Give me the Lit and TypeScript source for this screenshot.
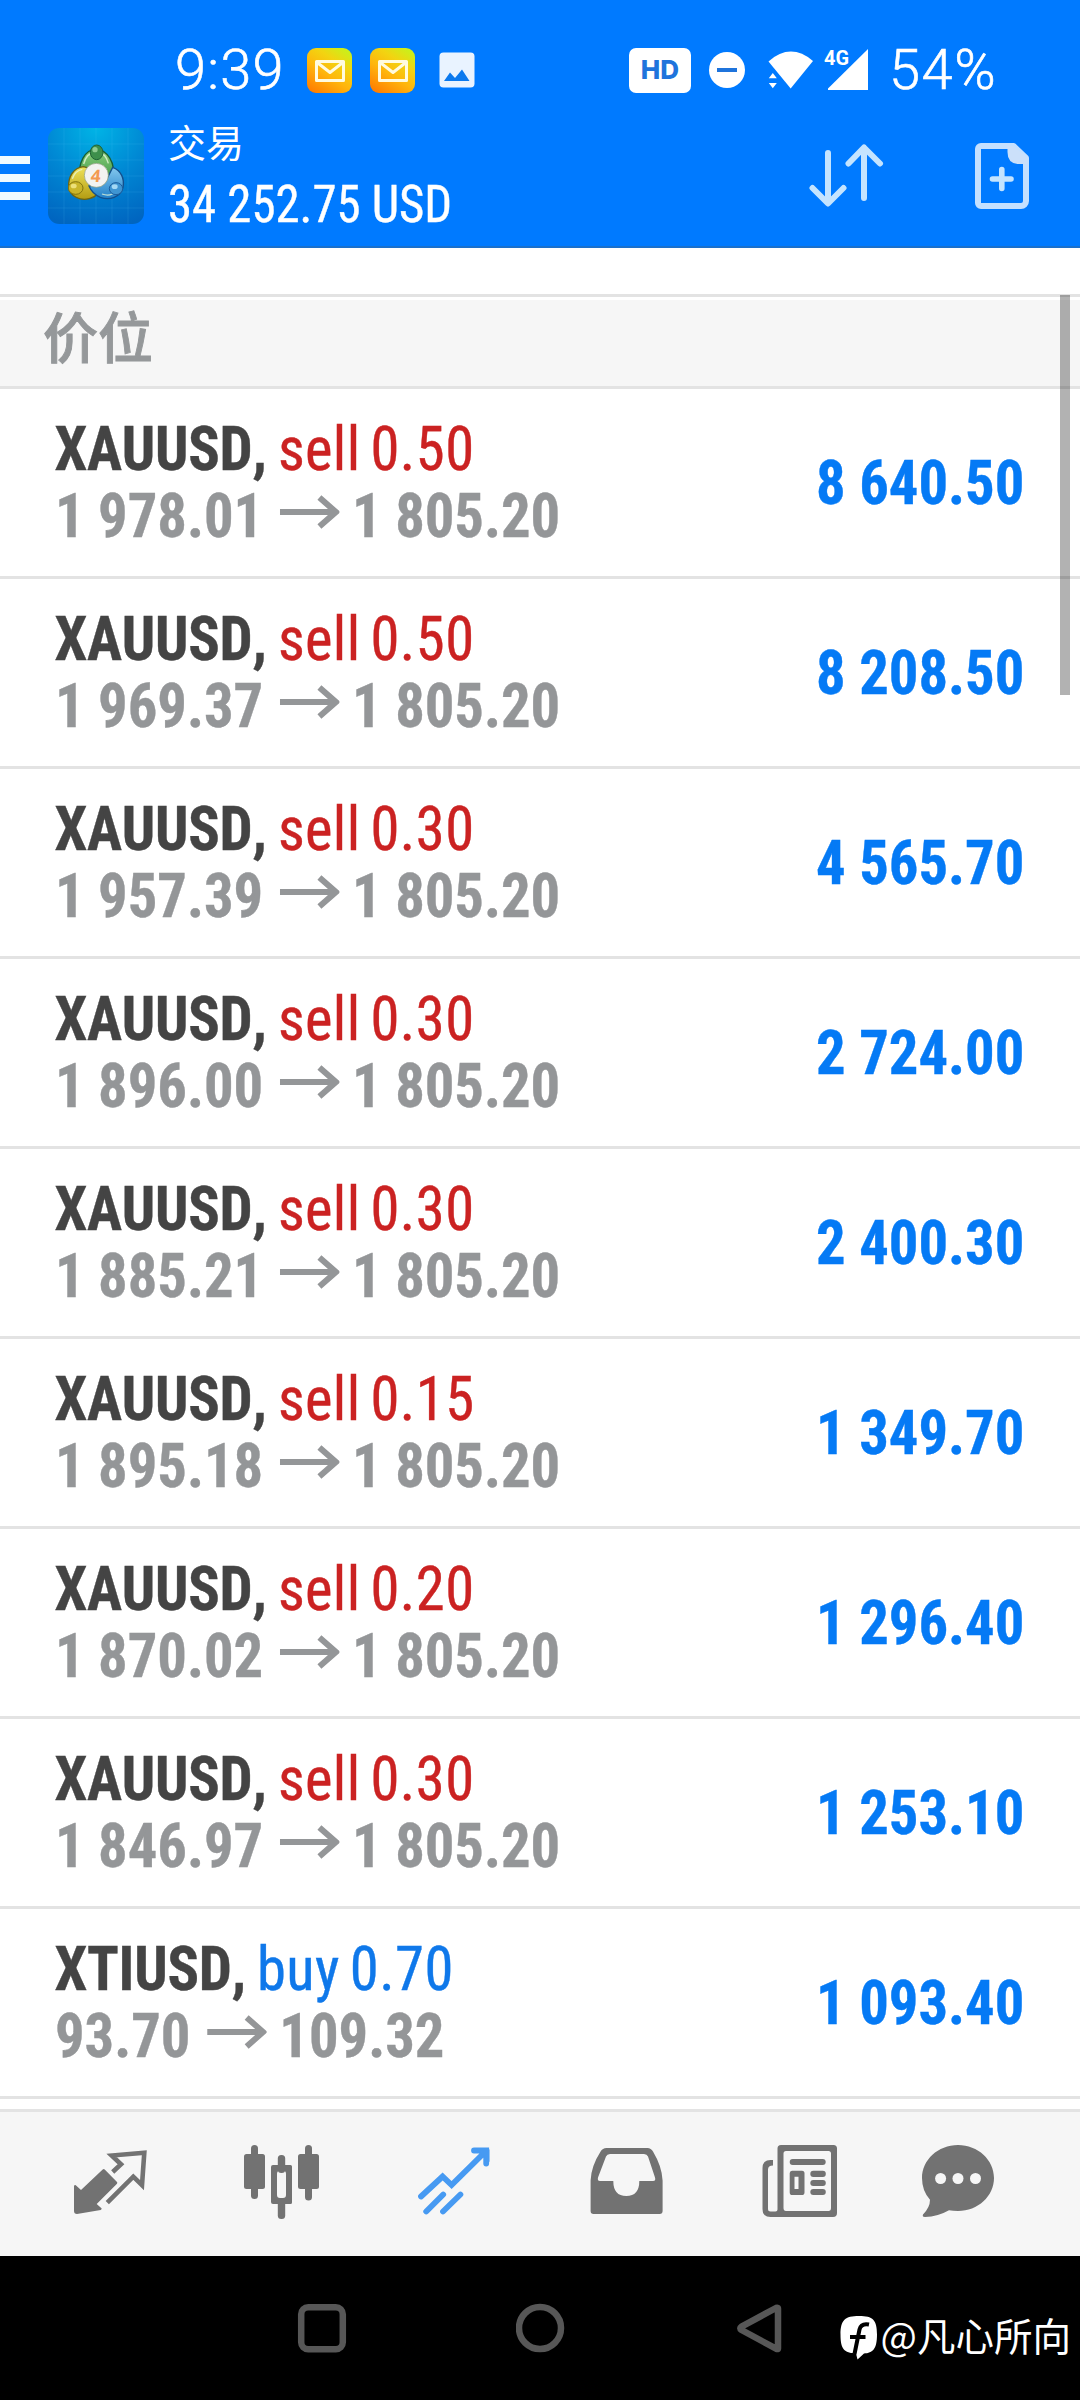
import { LitElement, html, svg, css } from 'lit';
import { customElement, property } from 'lit/decorators.js';
import { classMap } from 'lit/directives/class-map.js';

interface Position {
  symbol: string;
  side: 'sell' | 'buy';
  volume: string;
  open: string;
  current: string;
  profit: string;
}

const p = (
  symbol: string, side: 'sell' | 'buy', volume: string,
  open: string, current: string, profit: string,
): Position => ({ symbol, side, volume, open, current, profit });

const POSITIONS: Position[] = [
  p('XAUUSD', 'sell', '0.50', '1 978.01', '1 805.20', '8 640.50'),
  p('XAUUSD', 'sell', '0.50', '1 969.37', '1 805.20', '8 208.50'),
  p('XAUUSD', 'sell', '0.30', '1 957.39', '1 805.20', '4 565.70'),
  p('XAUUSD', 'sell', '0.30', '1 896.00', '1 805.20', '2 724.00'),
  p('XAUUSD', 'sell', '0.30', '1 885.21', '1 805.20', '2 400.30'),
  p('XAUUSD', 'sell', '0.15', '1 895.18', '1 805.20', '1 349.70'),
  p('XAUUSD', 'sell', '0.20', '1 870.02', '1 805.20', '1 296.40'),
  p('XAUUSD', 'sell', '0.30', '1 846.97', '1 805.20', '1 253.10'),
  p('XTIUSD', 'buy', '0.70', '93.70', '109.32', '1 093.40'),
];

@customElement('status-bar')
export class StatusBar extends LitElement {
  static styles = css`
    :host { display: block; color: #fff; }
    .bar {
      display: flex; align-items: center; height: 100px;
      padding: 20px 0 0 175px; box-sizing: content-box;
      font: 300 56px/60px Roboto, sans-serif; -webkit-text-stroke: .6px #fff;
    }
    .time { width: 132px; white-space: nowrap; letter-spacing: 1.2px; }
    .mail { width: 45px; height: 45px; margin-right: 18px; }
    .photo { width: 36px; height: 36px; margin-left: 6px; }
    .hd {
      width: 62px; height: 45px; border-radius: 7px; background: #fff;
      color: #1f74dc; text-align: center; font: 800 26px/44px Inter, sans-serif;
      margin-left: 154px; -webkit-text-stroke: 0;
    }
    .dnd { width: 36px; height: 36px; margin-left: 18px; }
    .net { width: 104px; height: 44px; margin-left: 22px; overflow: visible; }
    .battery { margin-left: 18px; letter-spacing: 1.5px; }
    .net text { font: 700 21px Roboto, sans-serif; }
  `;
  private mail(id: string) {
    return html`<svg class="mail" viewBox="0 0 45 45">
      <defs>
        <linearGradient id=${id} x1="0.1" y1="1" x2="0.75" y2="0">
          <stop offset="0" stop-color="#ff7a00"/><stop offset=".45" stop-color="#ffb60c"/>
          <stop offset=".75" stop-color="#f2d411"/><stop offset="1" stop-color="#cdee1a"/>
        </linearGradient>
      </defs>
      <rect width="45" height="45" rx="9" fill="url(#${id})"/>
      <path d="M9.500 13.500h27v19h-27zM9.500 14l13.500 10.500L36.500 14" fill="none" stroke="#fffbe0" stroke-width="3" stroke-linejoin="round"/>
    </svg>`;
  }
  render() {
    return html`<div class="bar">
      <span class="time">9:39</span>
      ${this.mail('m1')}${this.mail('m2')}
      <svg class="photo" viewBox="0 0 36 36">
        <rect x=".5" y=".5" width="35" height="35" rx="4" fill="#e9f3ff"/>
        <path d="M5 29l6-8.500 5 5.500 7-8.500 7.500 11.500z" fill="#0b79ee"/>
      </svg>
      <span class="hd">HD</span>
      <svg class="dnd" viewBox="0 0 36 36">
        <circle cx="18" cy="18" r="18" fill="#fff"/><path d="M8 18h20" stroke="#1f74dc" stroke-width="4"/>
      </svg>
      <svg class="net" viewBox="767 47 104 44">
        <path d="M768.500 60.500Q790.500 41 813 60L790.700 87.500z" fill="#fff"/>
        <path d="M768.800 77.300l4-5.300 4 5.300zM768.800 82l4 5.300 4-5.300z" fill="#fff" stroke="#007aff" stroke-width="1" paint-order="stroke"/>
        <text x="824" y="64" fill="#fff" textLength="25" lengthAdjust="spacingAndGlyphs">4G</text>
        <path d="M868 48v41h-40v-1.500z" fill="#fff"/>
      </svg>
      <span class="battery">54%</span>
    </div>`;
  }
}

@customElement('app-bar')
export class AppBar extends LitElement {
  static styles = css`
    :host { display: block; color: #fff; }
    .bar { display: flex; align-items: center; height: 112px; padding-bottom: 14px; }
    .menu { width: 30px; height: 44px; padding-top: 4px; }
    .logo { width: 96px; height: 96px; margin-left: 18px; }
    .four { font: 700 52px "Open Sans", sans-serif; }
    .account { align-self: flex-start; margin-left: 24px; padding-top: 1px; flex: 1; }
    .title { font: 400 38px/40px "Noto Sans CJK SC", sans-serif; }
    .balance {
      font: 400 51px/60px "Roboto Condensed", Roboto, sans-serif; margin-top: 14px;
      transform: scaleX(.956); transform-origin: left; -webkit-text-stroke: .4px #fff;
    }
    .sort { width: 76px; height: 66px; }
    .order { width: 56px; height: 68px; margin: 0 50px 0 90px; }
  `;
  render() {
    return html`<div class="bar">
      <svg class="menu" viewBox="0 0 30 44"><path d="M0 4h30M0 22h30M0 40h30" stroke="#f0faff" stroke-width="8"/></svg>
      <svg class="logo" viewBox="144 24 288 288">
        <defs>
          <radialGradient id="bg" cx=".5" cy="0" r="1.050">
            <stop offset="0" stop-color="#00b4e6"/><stop offset=".5" stop-color="#0088d4"/><stop offset="1" stop-color="#0065c0"/>
          </radialGradient>
          <linearGradient id="g" x1="0" y1="0" x2="0" y2="1"><stop offset="0" stop-color="#8ccf7c"/><stop offset="1" stop-color="#2c8c3c"/></linearGradient>
          <linearGradient id="y" x1="0" y1="0" x2="0" y2="1"><stop offset="0" stop-color="#efe25a"/><stop offset="1" stop-color="#b39c12"/></linearGradient>
          <linearGradient id="b" x1="0" y1="0" x2="0" y2="1"><stop offset="0" stop-color="#84c8ee"/><stop offset="1" stop-color="#2280c8"/></linearGradient>
        </defs>
        <rect x="144" y="24" width="288" height="288" rx="34" fill="url(#bg)"/>
        <path d="M192 24v288M240 24v288M288 24v288M336 24v288M384 24v288M144 72h288M144 120h288M144 168h288M144 216h288M144 264h288" stroke="#5cc8f4" stroke-opacity=".2" stroke-width="2"/>
        <path d="M240 178C232 128 256 88 288 88s62 40 50 92l-50 20z" fill="url(#g)" stroke="#185f34" stroke-width="4"/>
        <path d="M250 140c-30 4-46 30-44 62 4 26 34 42 62 34 16-4 24-14 24-14l-20-76z" fill="url(#y)" stroke="#6e6410" stroke-width="4"/>
        <path d="M338 142c26 10 36 34 31 60-8 30-40 40-68 30-18-8-30-24-34-34l50-14z" fill="url(#b)" stroke="#134f8c" stroke-width="4"/>
        <path d="M251 132q8-34 38-36 28 2 36 34M217 176q8-24 30-28M306 222q26 10 44-10" fill="none" stroke="#e6f8d8" stroke-opacity=".8" stroke-width="4"/>
        <ellipse cx="290" cy="97" rx="19" ry="22" fill="#3d8f4b" stroke="#1f6235" stroke-width="3"/>
        <ellipse cx="285" cy="89" rx="8" ry="8" fill="#8fcb90"/>
        <ellipse cx="227" cy="204" rx="22" ry="19" fill="#c9b52a" stroke="#82740f" stroke-width="3"/>
        <ellipse cx="221" cy="198" rx="9" ry="7" fill="#ece07a"/>
        <ellipse cx="348" cy="206" rx="20" ry="18" fill="#3f95d2" stroke="#1a5c9c" stroke-width="3"/>
        <ellipse cx="344" cy="200" rx="9" ry="7" fill="#a4d8f4"/>
        <circle cx="289" cy="166" r="36" fill="#f3f3f1" stroke="#8d9a78" stroke-width="2"/>
        <text class="four" x="272" y="186" fill="#f39a50" transform="skewX(-6) translate(18 0)">4</text>
      </svg>
      <div class="account">
        <div class="title">交易</div>
        <div class="balance">34 252.75 USD</div>
      </div>
      <svg class="sort" viewBox="808 143 76 66" fill="none" stroke="#c4e4ff" stroke-width="6" stroke-linecap="round" stroke-linejoin="round">
        <path d="M828 153v50M812.500 188L828 203.500 843.500 188M864 198v-50M848.500 163.500L864 147.500 880 163.500"/>
      </svg>
      <svg class="order" viewBox="974 142 56 68">
        <path d="M981 146h32.500L1026 158v43a5 5 0 0 1-5 5h-40a3 3 0 0 1-3-3v-54a3 3 0 0 1 3-3z" fill="none" stroke="#c4e0ff" stroke-width="6" stroke-linejoin="round"/>
        <path d="M1007.500 146h6l14 12v6h-10q-10-1-10-12z" fill="#cbe0fa"/>
        <path d="M992.500 179h18.500M1001.800 169.500v19" stroke="#c4e4ff" stroke-width="5.600" stroke-linecap="round"/>
      </svg>
    </div>`;
  }
}

@customElement('position-row')
export class PositionRow extends LitElement {
  @property({ attribute: false }) position!: Position;
  static styles = css`
    :host { display: block; }
    .row {
      display: flex; align-items: center; justify-content: space-between;
      height: 187px; padding: 0 56px 0 55px; border-bottom: 3px solid #e3e3e3; box-sizing: content-box;
      font: 700 62px/67px "Roboto Condensed", Roboto, sans-serif; white-space: nowrap;
      -webkit-text-stroke: .4px currentColor;
    }
    .info { transform: scaleX(.945); transform-origin: left; padding-bottom: 2px; }
    .deal { display: flex; font-weight: 400; margin-left: -.5px; }
    .symbol { color: #444; font-weight: 700; font-kerning: none; letter-spacing: -.25px; margin-right: 12px; -webkit-text-stroke-color: #444; }
    .side { letter-spacing: .4px; }
    .volume { letter-spacing: .5px; margin-left: 10.500px; }
    .sell { color: #cb2222; -webkit-text-stroke-color: #cb2222; }
    .buy { color: #0f78ea; -webkit-text-stroke-color: #0f78ea; }
    .prices { display: flex; align-items: center; color: #949698; -webkit-text-stroke-color: #949698; }
    .arrow { width: 63.5px; height: 34px; margin: 0 13px 6px 17.500px; }
    .profit { color: #057af5; -webkit-text-stroke-color: #057af5; transform: scaleX(.945); transform-origin: right; }
  `;
  render() {
    const { symbol, side, volume, open, current, profit } = this.position;
    const tone = { [side]: true };
    return html`<div class="row">
      <div class="info">
        <div class="deal"><span class="symbol">${symbol},</span><span class=${classMap({ side: true, ...tone })}>${side}</span><span class=${classMap({ volume: true, ...tone })}>${volume}</span></div>
        <div class="prices"><span>${open}</span><svg class="arrow" viewBox="0 0 60 34" preserveAspectRatio="none" fill="none" stroke="#949698" stroke-width="6"><path d="M0 17h56M39.500 2.500L56 17 39.500 31.500"/></svg><span>${current}</span></div>
      </div>
      <span class="profit">${profit}</span>
    </div>`;
  }
}

const TAB_ART = [
  svg`<path d="M74 73.500l1.500-.5 5.500 5L102.700 57.500q1-.8 2 0L117 70q.6.800 0 1.800L96.700 92l5 4.600q0 1-1 1.400L77 102q-3 0-3-3z"/>
    <path d="M112.700 60l8.300-7.700-9.300-8.800 32.600-2.800-2.300 32.500-8.700-8.500-26 26" fill="none" stroke="currentColor" stroke-width="4.600"/>`,
  svg`<rect x="244" y="42" width="21" height="35" rx="2.500"/><rect x="251" y="33" width="7" height="54" rx="3.500"/>
    <rect x="277.800" y="43" width="7.400" height="18" rx="3.500"/><rect x="277.800" y="86" width="7.400" height="21" rx="3.500"/>
    <path fill-rule="evenodd" d="M273 53h17.500q1.500 0 1.500 1.500v36q0 1.500-1.500 1.500H273q-2 0-2-2V55q0-2 2-2zM280 58.700q-3 0-3 3V83q0 3 3 3h3q3 0 3-3V61.700q0-3-3-3z"/>
    <rect x="298" y="42" width="21" height="35" rx="2.500"/><rect x="305" y="33" width="7" height="55.500" rx="3.500"/>`,
  svg`<path d="M421 84.500l21.600-20 9 8.500L485 40M474 38.500h12.200V51.500M426.200 99.500l17-17M443 99.500l17.400-17" fill="none" stroke="currentColor" stroke-width="5.800" stroke-linecap="round" stroke-linejoin="miter"/><path d="M476 36h11q2.500 0 2.500 2.500V50z"/>`,
  svg`<path fill-rule="evenodd" d="M606.500 36h41q3.500 0 5.500 3.500 9 15 9.600 29V99q0 3-3 3h-66q-3 0-3-3V68.500q.4-14 10-29Q602.500 36 606.500 36zM610 42q-3 0-4 2.500l-8 21q-.8 3.500 2 3.500h13.300q0 15 13 15t13-15H653q3 0 2-3.500l-7-21Q647 42 644 42z"/>`,
  svg`<path fill-rule="evenodd" d="M781 33h52.500q3.500 0 3.500 3.500V101q0 4-4 4h-62.500q-8 0-8-8V56q0-8 8-8h2.500v5.500q-5 0-5 4V97q0 2.500 2.500 2.500h5q2 0 2-2V36.500q0-3.500 3.500-3.500zM786 39q-2.500 0-2.500 2.500V96q0 3 2.500 3h42.500q2.500 0 2.500-3V41.500q0-2.500-2.500-2.500z"/>
    <rect x="789.700" y="47" width="36" height="6" rx="3"/>
    <path fill-rule="evenodd" d="M792 58.700h10q2.500 0 2.500 2.500v19q0 2.800-2.500 2.800h-10q-2.300 0-2.300-2.800v-19q0-2.500 2.300-2.500zM794.500 64.700v12.300h4V64.700z"/>
    <rect x="810.300" y="58.700" width="15.500" height="6.200" rx="3"/><rect x="810.300" y="68" width="15.500" height="6" rx="3"/><rect x="810.300" y="77" width="15.500" height="6" rx="3"/>`,
  svg`<path d="M958 33c20 0 36 15 36 33s-16 33-36 33q-5 0-9-.8-11 6.300-24 6.800-3 0-2-2.500 7-7 7-14.700-8-9-8-21.800c0-18 16-33 36-33z"/>
    <circle cx="940.600" cy="66.500" r="5.500" fill="#f6f6f6"/><circle cx="958" cy="66.500" r="5.500" fill="#f6f6f6"/><circle cx="975.500" cy="66.500" r="5.500" fill="#f6f6f6"/>`,
];

@customElement('tab-bar')
export class TabBar extends LitElement {
  static styles = css`
    :host { display: block; }
    .tabs { display: flex; height: 144px; padding: 0 24px; background: #f6f6f6; border-top: 3px solid #e3e3e3; }
    .tab { width: 172px; height: 144px; color: #727272; fill: currentColor; }
    .active { color: #479af2; }
  `;
  render() {
    return html`<nav class="tabs">${TAB_ART.map((art, i) => html`
      <svg class=${classMap({ tab: true, active: i === 2 })} viewBox="${24 + 172 * i} 0 172 144">${art}</svg>`)}
    </nav>`;
  }
}

@customElement('app-root')
export class AppRoot extends LitElement {
  static styles = css`
    :host { display: block; }
    .screen { position: relative; display: flex; flex-direction: column; width: 1080px; height: 2400px; background: #fff; overflow: hidden; }
    .header { background: #007aff; border-bottom: 2px solid #1a70cc; height: 246px; }
    .edge { border-top: 3px solid #e3e3e3; margin-top: 46px; height: 3px; }
    .section {
      display: flex; align-items: center; height: 86px; padding: 0 43px 18px; box-sizing: border-box;
      background: #f6f6f6; color: #95989a; -webkit-text-stroke: .9px #95989a;
      font: 500 55px/60px "Noto Sans CJK SC", sans-serif;
    }
    .list { border-top: 3px solid #e3e3e3; }
    .scroll { position: absolute; left: 1060px; top: 295px; width: 10px; height: 400px; background: rgba(0, 0, 0, .3); }
    .tabs { margin-top: 10px; }
    .system { display: flex; flex: 1; align-items: center; justify-content: space-between; background: #000; padding: 0 295px 0 297px; }
    .key { width: 50px; height: 52px; fill: none; stroke: #575757; stroke-width: 6.5; stroke-linejoin: round; }
    .mark {
      position: absolute; right: 9px; bottom: 40px; display: flex; align-items: center; gap: 3px;
      color: #fff; font: 400 38.5px/52px "Noto Sans CJK SC", sans-serif; white-space: nowrap;
    }
    .badge { width: 38px; height: 44px; margin-top: 8px; }
  `;
  render() {
    return html`<div class="screen">
      <header class="header"><status-bar></status-bar><app-bar></app-bar></header>
      <div class="edge"></div>
      <div class="section">价位</div>
      <main class="list">${POSITIONS.map((x) => html`<position-row .position=${x}></position-row>`)}</main>
      <tab-bar class="tabs"></tab-bar>
      <footer class="system">
        <svg class="key" viewBox="0 0 50 52"><rect x="4.200" y="5.200" width="41.600" height="42" rx="7"/></svg>
        <svg class="key" viewBox="1 0 50 52"><circle cx="25" cy="26" r="21"/></svg>
        <svg class="key" viewBox="0 0 50 52"><path d="M43 6.500v40q0 1-1.500.4L6.500 28q-2.500-1.600 0-3.400L41 6q2-.5 2 .5z"/></svg>
      </footer>
      <div class="scroll"></div>
      <div class="mark">
        <svg class="badge" viewBox="0 0 38 44">
          <path d="M19 0C33 0 37 4 37 18.500 37 33 33 37 24 37.500L17.500 43.500 16 37.500C4 37 .500 33 .500 18.500 .500 4 5 0 19 0z" fill="#fff"/>
          <path d="M29 8.500q-8-1.500-9.500 5L14.500 38M10 21h15.500" fill="none" stroke="#000" stroke-width="4"/>
        </svg>
        <span>@凡心所向</span>
      </div>
    </div>`;
  }
}
